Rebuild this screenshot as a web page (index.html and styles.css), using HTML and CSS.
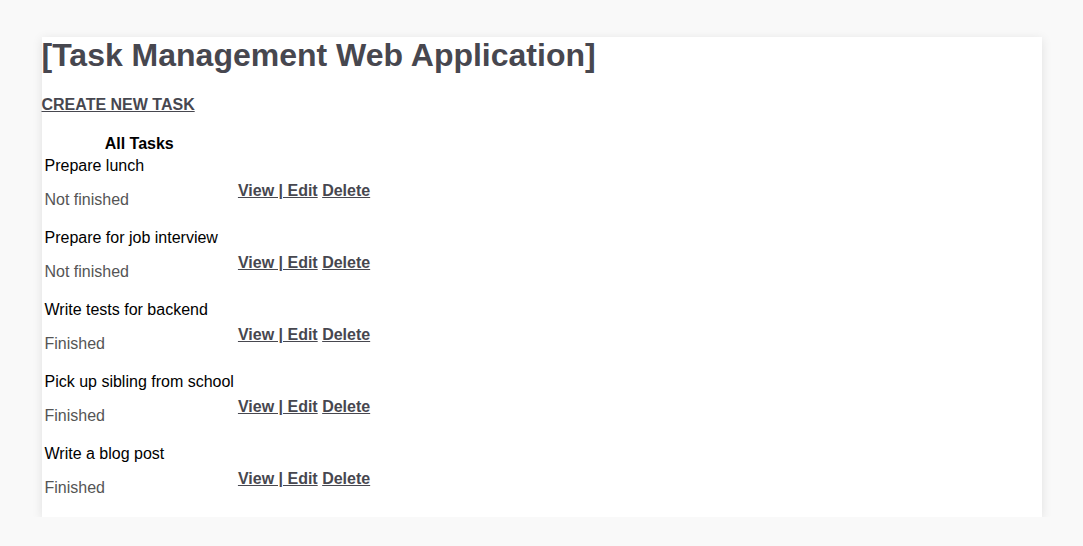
FILE: index.html
```html
<!DOCTYPE html>
<html>
<head>
<meta charset="utf-8">
<title>Task Management</title>
<link rel="stylesheet" href="styles.css">
</head>
<body>
<div class="card">
  <h1 class="title">[Task Management Web Application]</h1>
  <a class="create" href="#">CREATE NEW TASK</a>
  <table class="tasks">
    <thead><tr><th>All Tasks</th><th></th></tr></thead>
    <tbody>
      <tr><td><div class="name">Prepare lunch</div><p class="status">Not finished</p></td><td class="actions"><a href="#">View | Edit</a> <a href="#">Delete</a></td></tr>
      <tr><td><div class="name">Prepare for job interview</div><p class="status">Not finished</p></td><td class="actions"><a href="#">View | Edit</a> <a href="#">Delete</a></td></tr>
      <tr><td><div class="name">Write tests for backend</div><p class="status">Finished</p></td><td class="actions"><a href="#">View | Edit</a> <a href="#">Delete</a></td></tr>
      <tr><td><div class="name">Pick up sibling from school</div><p class="status">Finished</p></td><td class="actions"><a href="#">View | Edit</a> <a href="#">Delete</a></td></tr>
      <tr><td><div class="name">Write a blog post</div><p class="status">Finished</p></td><td class="actions"><a href="#">View | Edit</a> <a href="#">Delete</a></td></tr>
    </tbody>
  </table>
</div>
</body>
</html>
```
FILE: styles.css
```css
html, body {
  margin: 0;
  padding: 0;
  background: #f9f9f9;
  font-family: "Liberation Sans", Arial, sans-serif;
  font-size: 16px;
  line-height: 18px;
}
.card {
  width: 1000px;
  margin: 37px auto 0;
  background: #fff;
  box-shadow: 0 2px 10px rgba(0, 0, 0, 0.1);
  padding-bottom: 1px;
}
.title {
  margin: 0;
  font-size: 32px;
  line-height: 37px;
  font-weight: bold;
  color: #47474f;
}
.create {
  display: inline-block;
  margin-top: 22px;
  font-weight: bold;
  color: #47474f;
  text-decoration: underline;
}
.tasks {
  margin-top: 18px;
  border-spacing: 2px;
}
.tasks th {
  padding: 1px;
  font-weight: bold;
  color: #000;
  line-height: 18px;
}
.tasks td {
  padding: 1px;
  vertical-align: middle;
}
.name {
  color: #000;
  line-height: 18px;
}
.status {
  margin: 16px 0;
  color: #555;
  line-height: 18px;
}
.actions a {
  font-weight: bold;
  color: #47474f;
  text-decoration: underline;
}
```
